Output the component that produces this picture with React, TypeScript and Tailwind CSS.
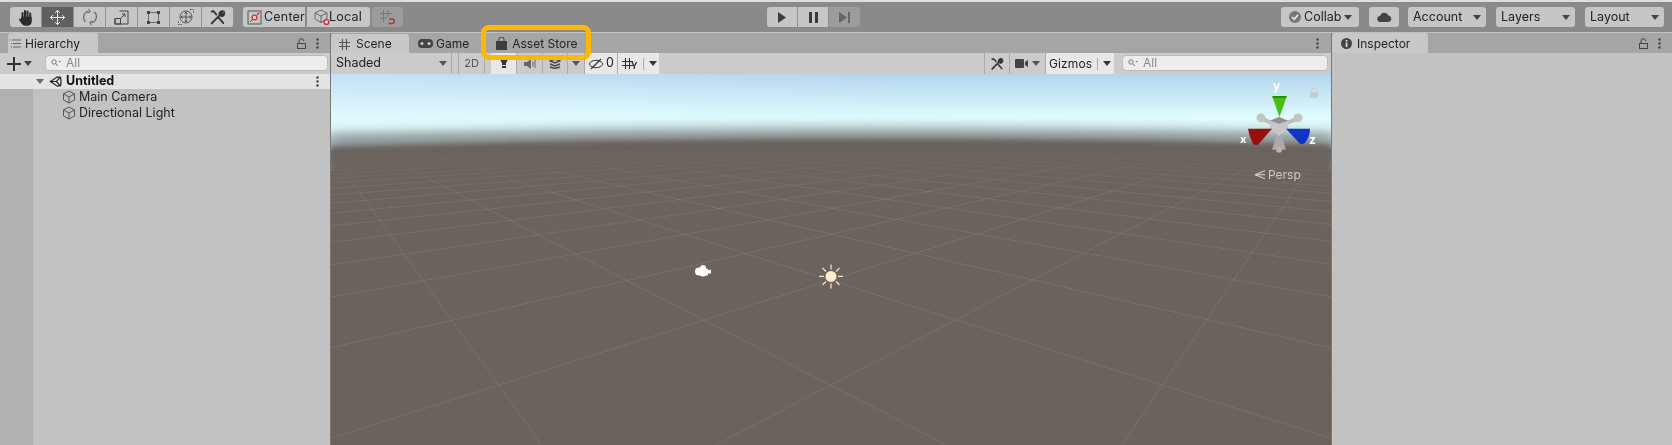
import React from 'react';
import { Move } from 'lucide-react';

// ---- small drawn icons ----
const Caret: React.FC<{ className?: string }> = ({ className = 'text-[#444]' }) => (
    <svg width="8" height="5" viewBox="0 0 8 5" className={className}><path d="M0 0h8L4 5z" fill="currentColor" /></svg>
);

const Dots: React.FC = () => (
    <svg width="3" height="11" viewBox="0 0 3 11" className="text-[#444]">
        <circle cx="1.5" cy="1.5" r="1.2" fill="currentColor" /><circle cx="1.5" cy="5.5" r="1.2" fill="currentColor" /><circle cx="1.5" cy="9.5" r="1.2" fill="currentColor" />
    </svg>
);

const LockOpen: React.FC = () => (
    <svg width="9" height="11" viewBox="0 0 9 11" fill="none" stroke="#444" strokeWidth="1">
        <path d="M2 5V3a2.3 2.3 0 0 1 4.6 0" /><rect x="0.5" y="5.5" width="8" height="5" />
    </svg>
);

const Cube: React.FC = () => (
    <svg width="14" height="14" viewBox="0 0 14 14" fill="none" stroke="#555" strokeWidth="1" className="shrink-0">
        <path d="M7 1l5.5 3v6L7 13 1.5 10V4zM1.5 4L7 7l5.5-3M7 7v6" />
    </svg>
);

const Magnifier: React.FC = () => (
    <svg width="10" height="8" viewBox="0 0 10 8" fill="none" stroke="#777" strokeWidth="1" className="shrink-0">
        <circle cx="3" cy="3" r="2.2" /><path d="M4.7 4.7L7 7" /><path d="M7.5 2h2.5L8.8 3.5z" fill="#777" stroke="none" />
    </svg>
);

const Grid: React.FC<{ className?: string }> = ({ className = 'text-[#555]' }) => (
    <svg width="11" height="11" viewBox="0 0 11 11" fill="none" stroke="currentColor" strokeWidth="1.1" className={className}>
        <path d="M3.5 0v11M7.5 0v11M0 3.5h11M0 7.5h11" />
    </svg>
);

const ListIcon: React.FC = () => (
    <svg width="12" height="9" viewBox="0 0 12 9" fill="none" stroke="#666" strokeWidth="1" className="mr-[4px] ml-[1px]">
        <path d="M0 1h1M3 1h9M2 4.500h1M4 4.500h8M2 8h1M4 8h8" />
    </svg>
);

const HandIcon = () => (
    <svg width="16" height="17" viewBox="0 0 16 17" fill="none" stroke="#2b2b2b" strokeLinecap="round">
        <path d="M4.500 9V4M7 8V2M9.500 8V2.500M12.200 9V4.500" strokeWidth="2" />
        <path d="M4 8.500h9V12c0 2.500-1.500 4-4 4H7.500C5.500 16 4.800 15 4 13.800L1.800 10.500" fill="#2b2b2b" strokeWidth="1.600" strokeLinejoin="round" />
    </svg>
);

const Tools: React.FC<{ size?: number }> = ({ size = 17 }) => (
    <svg width={size} height={size} viewBox="0 0 16 16" fill="none" stroke="#333" strokeLinecap="round">
        <path d="M2.500 13.500L10 6" strokeWidth="1.900" />
        <path d="M9.500 5a3 3 0 0 1 4-3l-1.800 1.800 1 1L14.500 3a3 3 0 0 1-3.200 4" strokeWidth="1.200" fill="#333" />
        <path d="M2.500 2.500L4 2l3 3.200M9 8.200l4.500 5" strokeWidth="1.700" />
    </svg>
);

const RotateIcon = () => (
    <svg width="18" height="18" viewBox="0 0 18 18" fill="none" stroke="#666" strokeWidth="1.100">
        <path d="M7 3.200A6.500 6.500 0 0 0 4.500 14" /><path d="M11 14.800A6.500 6.500 0 0 0 13.500 4" /><path d="M7.500 1L9 3.500 6.500 5" /><path d="M10.500 17L9 14.500l2.500-1.500" />
    </svg>
);

const ScaleIcon = () => (
    <svg width="15" height="15" viewBox="0 0 15 15" fill="none" stroke="#444" strokeWidth="1">
        <path d="M5.500 1H14v13H1V9" /><rect x="1" y="8.500" width="5.500" height="5.500" /><path d="M7 8l4-4M8 4h3v3" />
    </svg>
);

const RectIcon = () => (
    <svg width="15" height="15" viewBox="0 0 15 15" fill="#444" stroke="#444">
        <path d="M2.500 2.500h10v10h-10z" fill="none" strokeWidth="0.700" /><rect x="1.500" y="1.500" width="2" height="2" /><rect x="11.500" y="1.500" width="2" height="2" /><rect x="1.500" y="11.500" width="2" height="2" /><rect x="11.500" y="11.500" width="2" height="2" />
    </svg>
);

const TransformIcon = () => (
    <svg width="18" height="18" viewBox="0 0 18 18" fill="none" stroke="#555" strokeWidth="1">
        <circle cx="9" cy="9" r="6" /><path d="M9 4v10M4 9h10M7.500 5.500L9 4l1.500 1.500M7.500 12.500L9 14l1.500-1.500M5.500 7.500L4 9l1.500 1.500M12.500 7.500L14 9l-1.500 1.500" /><path d="M13 1.500h3.500V5M5 16.500H1.500V13" strokeDasharray="1.500 1" />
    </svg>
);

const PivotCenter = () => (
    <svg width="15" height="15" viewBox="0 0 15 15" fill="none" className="shrink-0">
        <rect x="1" y="1" width="13" height="13" stroke="#555" /><path d="M3 12l8-8" stroke="#555" /><circle cx="7.500" cy="7.500" r="2.400" stroke="#c33" strokeWidth="1.300" fill="#ddd" /><circle cx="11.500" cy="3.500" r="1" fill="#c33" />
    </svg>
);

const PivotLocal = () => (
    <svg width="17" height="17" viewBox="0 0 17 17" fill="none" className="shrink-0">
        <path d="M7 1l6 3v6l-6 3.500L1 10V4zM1 4l6 3 6-3M7 7v6.500" stroke="#666" /><circle cx="12.500" cy="13" r="2.400" stroke="#c33" strokeWidth="1.400" fill="#ddd" />
    </svg>
);

const SnapIcon = () => (
    <svg width="15" height="15" viewBox="0 0 15 15" fill="none">
        <path d="M3.500 0v12M8 0v7M0 3.500h12M0 8h7" stroke="#777" strokeWidth="1" /><path d="M9 9h3a2 2 0 0 1 0 4.500H8.500" stroke="#b33" strokeWidth="1.500" />
    </svg>
);

const UnityLogo = () => (
    <svg width="13" height="13" viewBox="0 0 14 14" fill="none" stroke="#222" strokeWidth="1.300" className="shrink-0">
        <path d="M1.500 7L9 2l3.500 0.500L13 7l-.5 4.500L9 12z" /><path d="M1.500 7H8L12 2.500M8 7l4 4.500" />
    </svg>
);

// ---- toolbar ----
const ToolButton: React.FC<{ children: React.ReactNode; active?: boolean; first?: boolean; last?: boolean; narrow?: boolean }> = ({ children, active, first, last, narrow }) => (
    <div className={`flex h-[20px] ${narrow ? 'w-[31px]' : 'w-[32px]'} items-center justify-center border-r border-[#8f8f8f] ${active ? 'bg-[#5f5f5f]' : 'bg-[#c6c6c6]'} ${first ? 'rounded-l-[3px]' : ''} ${last ? 'rounded-r-[3px]' : ''}`}>
        {children}
    </div>
);

const MenuButton: React.FC<{ label: string; width: string }> = ({ label, width }) => (
    <div className={`flex h-[20px] ${width} items-center justify-between rounded-[3px] bg-[#c6c6c6] pl-[5px] pr-[5px] text-[12.5px] text-[#222]`}>
        <span>{label}</span>
        <Caret />
    </div>
);

const TopBar: React.FC = () => (
    <div className="flex h-[30px] shrink-0 items-center bg-[#8a8a8a] pl-[10px]">
        <div className="flex">
            <ToolButton first><HandIcon /></ToolButton>
            <ToolButton active><Move size={17} stroke="#eee" strokeWidth={1.4} /></ToolButton>
            <ToolButton><RotateIcon /></ToolButton>
            <ToolButton><ScaleIcon /></ToolButton>
            <ToolButton><RectIcon /></ToolButton>
            <ToolButton><TransformIcon /></ToolButton>
            <ToolButton last><Tools /></ToolButton>
        </div>
        <div className="ml-[9px] flex gap-[2px]">
            <div className="flex h-[20px] w-[62px] items-center gap-[2px] rounded-l-[3px] bg-[#c6c6c6] pl-[4px] text-[12.5px] tracking-[0.2px] text-[#222]"><PivotCenter />Center</div>
            <div className="flex h-[20px] w-[63px] items-center rounded-r-[3px] bg-[#c6c6c6] pl-[7px] text-[12.5px] tracking-[0.2px] text-[#222]"><PivotLocal /><span className="-ml-[2px]">Local</span></div>
        </div>
        <div className="ml-[2px] flex h-[20px] w-[31px] items-center justify-center rounded-[3px] bg-[#9c9c9c]"><SnapIcon /></div>

        <div className="ml-[364px] flex">
            <ToolButton first narrow>
                <svg width="10" height="11" viewBox="0 0 10 11"><path d="M1 0l8 5.500L1 11z" fill="#3a3a3a" /></svg>
            </ToolButton>
            <ToolButton narrow>
                <svg width="9" height="11" viewBox="0 0 9 11" fill="#3a3a3a"><rect width="3" height="11" /><rect x="6" width="3" height="11" /></svg>
            </ToolButton>
            <div className="flex h-[20px] w-[31px] items-center justify-center rounded-r-[3px] bg-[#9c9c9c]">
                <svg width="11" height="11" viewBox="0 0 11 11" fill="#666"><path d="M0 0l8 5.500L0 11z" /><rect x="9" width="2" height="11" /></svg>
            </div>
        </div>

        <div className="ml-[421px] flex h-[20px] w-[78px] items-center gap-[3px] rounded-[3px] bg-[#c6c6c6] pl-[8px] text-[12.5px] text-[#222]">
            <svg width="12" height="12" viewBox="0 0 12 12" className="shrink-0"><circle cx="6" cy="6" r="6" fill="#777" /><path d="M3 6l2.200 2.400L9 3.800" fill="none" stroke="#eee" strokeWidth="1.600" /></svg>
            Collab<Caret />
        </div>
        <div className="ml-[10px] flex h-[20px] w-[30px] items-center justify-center rounded-[3px] bg-[#c6c6c6]">
            <svg width="15" height="10" viewBox="0 0 15 10" fill="#444"><path d="M3.500 10a3 3 0 0 1-.5-6A4.500 4.500 0 0 1 11.500 3.500 3.300 3.300 0 0 1 11.500 10z" /></svg>
        </div>
        <div className="ml-[9px]"><MenuButton label="Account" width="w-[78px]" /></div>
        <div className="ml-[10px]"><MenuButton label="Layers" width="w-[79px]" /></div>
        <div className="ml-[10px]"><MenuButton label="Layout" width="w-[79px]" /></div>
    </div>
);

// ---- panels ----
const PanelTab: React.FC<{ children: React.ReactNode; width: string; active?: boolean }> = ({ children, width, active }) => (
    <div className={`flex h-[20px] ${width} items-center pt-[1px] text-[12px] text-[#1f1f1f] ${active ? 'rounded-t-[3px] bg-[#c8c8c8]' : ''}`}>
        {children}
    </div>
);

const SearchBox: React.FC<{ width: string }> = ({ width }) => (
    <div className={`flex h-[16px] ${width} items-center gap-[5px] rounded-[4px] border border-[#bbb] bg-[#ededed] pl-[5px] text-[12px] text-[#8a8a8a]`}>
        <Magnifier />All
    </div>
);

const HierarchyPanel: React.FC = () => (
    <div className="flex w-[330px] shrink-0 flex-col bg-[#c2c2c2]">
        <div className="flex h-[20px] items-center bg-[#a5a5a5] pl-[8px] pr-[11px]">
            <PanelTab width="w-[90px]" active>
                <ListIcon />Hierarchy
            </PanelTab>
            <div className="ml-auto flex items-center gap-[10px]"><LockOpen /><Dots /></div>
        </div>
        <div className="flex h-[21px] items-center bg-[#cbcbcb] pl-[7px]">
            <svg width="14" height="14" viewBox="0 0 14 14" fill="#333"><rect y="6" width="14" height="2" /><rect x="6" width="2" height="14" /></svg>
            <span className="ml-[3px]"><Caret /></span>
            <span className="-mt-[2px] ml-[13px]"><SearchBox width="w-[283px]" /></span>
        </div>
        <div className="flex h-[15px] items-center bg-[#e4e4e4] pl-[36px] pr-[11px] text-[12.5px] font-bold text-[#111]">
            <Caret className="text-[#666]" />
            <span className="ml-[5px] mr-[4px]"><UnityLogo /></span>
            Untitled
            <span className="ml-auto"><Dots /></span>
        </div>
        <div className="flex flex-1">
            <div className="w-[33px] bg-[#b0b0b0]" />
            <div className="flex flex-col pl-[29px] text-[12.5px] leading-[16px] text-[#222]">
                <div className="flex h-[16px] items-center gap-[3px]"><Cube />Main Camera</div>
                <div className="flex h-[16px] items-center gap-[3px]"><Cube />Directional Light</div>
            </div>
        </div>
    </div>
);

// ---- scene view: perspective floor, drawn ----
const VP_A = { x: 303, y: 113 };
const VP_B = { x: 1343, y: 117 };
const REF_Y = 385;
const BOTTOM = 470;

const gridLine = (vp: { x: number; y: number }, xRef: number) => ({
    x1: vp.x,
    y1: vp.y,
    x2: vp.x + ((xRef - vp.x) * (BOTTOM - vp.y)) / (REF_Y - vp.y),
    y2: BOTTOM,
});

const range = (from: number, to: number) => Array.from({ length: to - from + 1 }, (_, i) => from + i);

const majorA = range(-1, 24).map((k) => gridLine(VP_A, 830.6 + 332 * k));
const majorB = range(-26, 3).map((k) => gridLine(VP_B, 498.4 + 332 * k));
const minorA = range(-10, 240).map((k) => gridLine(VP_A, 830.6 + 33.2 * k));
const minorB = range(-260, 30).map((k) => gridLine(VP_B, 498.4 + 33.2 * k));

const HORIZON = (dy: number) => `M331 ${146 + dy}Q830 ${131 + dy} 1331 ${144 + dy}V445H331Z`;

const SceneDrawing: React.FC = () => (
    <svg viewBox="331 73 1000 372" className="absolute inset-0 h-full w-full" preserveAspectRatio="none">
        <defs>
            <linearGradient id="sky" x1="0" y1="73" x2="0" y2="150" gradientUnits="userSpaceOnUse">
                <stop offset="0" stopColor="#b4d4ec" />
                <stop offset="0.58" stopColor="#e0fdff" />
                <stop offset="0.7" stopColor="#dcf6f7" />
                <stop offset="1" stopColor="#8f9a9b" />
            </linearGradient>
            <linearGradient id="skyLeft" x1="331" y1="0" x2="900" y2="0" gradientUnits="userSpaceOnUse">
                <stop offset="0" stopColor="#dff6ff" stopOpacity="0.4" />
                <stop offset="1" stopColor="#dff6ff" stopOpacity="0" />
            </linearGradient>
            <linearGradient id="floorFade" x1="0" y1="148" x2="0" y2="196" gradientUnits="userSpaceOnUse">
                <stop offset="0" stopColor="#6a625d" />
                <stop offset="1" stopColor="#6a625d" stopOpacity="0" />
            </linearGradient>
            <filter id="soft" x="-5%" y="-20%" width="110%" height="140%"><feGaussianBlur stdDeviation="2.500" /></filter>
            <filter id="softer" x="-5%" y="-20%" width="110%" height="140%"><feGaussianBlur stdDeviation="7" /></filter>
            <clipPath id="floorClip"><path d={HORIZON(4)} /></clipPath>
        </defs>

        <rect x="331" y="73" width="1000" height="90" fill="url(#sky)" />
        <rect x="331" y="73" width="1000" height="50" fill="url(#skyLeft)" />
        <path d={HORIZON(-10)} fill="#8c9495" filter="url(#softer)" />
        <path d={HORIZON(0)} fill="#6a625d" filter="url(#soft)" />
        <rect x="331" y="170" width="1000" height="275" fill="#6a625d" />

        <g clipPath="url(#floorClip)">
            {minorA.concat(minorB).map((l, i) => (
                <line key={i} {...l} stroke="#ffffff" strokeOpacity="0.016" strokeWidth="1" />
            ))}
            {majorA.concat(majorB).map((l, i) => (
                <line key={i} {...l} stroke="#ffffff" strokeOpacity="0.085" strokeWidth="1" />
            ))}
            <rect x="331" y="130" width="1000" height="66" fill="url(#floorFade)" />
        </g>

        {/* camera gizmo */}
        <g fill="#ffffff">
            <circle cx="699" cy="271" r="4" /><circle cx="703" cy="272" r="4" /><circle cx="703" cy="267.500" r="3" /><rect x="700" y="268" width="8" height="7" rx="1" />
            <path d="M707 270l4-1v4h-4z" />
        </g>

        {/* light gizmo */}
        <g stroke="#efe3bd" strokeWidth="1.300">
            <path d="M831 264v5M831 283v5M819 276h5M838 276h5M822.500 267.500l3.500 3.500M836 281l3.500 3.500M839.500 267.500l-3.500 3.500M826 281l-3.500 3.500" />
            <circle cx="831" cy="276" r="5.500" fill="#fdeecb" stroke="none" />
        </g>

        {/* orientation gizmo */}
        <g>
            <path d="M1279 125L1262 118M1279 125L1297 118" stroke="#bcbcbc" strokeWidth="4" />
            <path d="M1279 125l-7 24h14z" fill="#a9a9a9" />
            <circle cx="1261" cy="117" r="4.500" fill="#c4c4c4" /><circle cx="1298" cy="117" r="4.500" fill="#c4c4c4" />
            <circle cx="1279" cy="149" r="3" fill="#b5b5b5" />
            <path d="M1270 120l9-4 9 4v8l-9 7-9-7z" fill="#c7c7c7" />
            <path d="M1270 120l9-4 9 4-9 3z" fill="#8f8f8f" />
            <path d="M1272 95h15l-7.500 21z" fill="#46c20e" /><path d="M1272 95h15l-2 2h-11z" fill="#2c8a08" />
            <path d="M1248 128h24l-14 16q-3 1-5-1-4-7-5-15z" fill="#961010" />
            <path d="M1286 128h24q0 8-5 14-2 2-5 1z" fill="#1233c4" />
        </g>
        <rect x="1310" y="91" width="8" height="6" fill="#c8ccd0" /><path d="M1311.500 91v-1.500a2.500 2.500 0 0 1 5 0" fill="none" stroke="#c8ccd0" />
        <path d="M1265 170l-10 4 10 4" fill="none" stroke="#dcdcdc" strokeWidth="1" /><path d="M1255 174h10" stroke="#dcdcdc" />
    </svg>
);

const SceneToolbarCell: React.FC<{ children?: React.ReactNode; width: string; on?: boolean }> = ({ children, width, on }) => (
    <div className={`flex h-[21px] ${width} items-center justify-center border-r border-[#aaa] ${on ? 'bg-[#e8e8e8]' : ''}`}>{children}</div>
);

const SceneView: React.FC = () => (
    <div className="relative flex flex-1 flex-col border-x border-[#777]">
        <div className="flex h-[20px] items-center bg-[#a5a5a5] pr-[12px] pt-[1px] text-[12px] text-[#1f1f1f]">
            <PanelTab width="w-[78px]" active>
                <span className="ml-[8px] mr-[6px]"><Grid /></span>Scene
            </PanelTab>
            <svg width="15" height="9" viewBox="0 0 15 9" className="ml-[9px] mr-[3px]"><rect width="15" height="9" rx="4" fill="#444" /><circle cx="4" cy="4.500" r="1.500" fill="#ccc" /><circle cx="11" cy="4.500" r="1.500" fill="#ccc" /></svg>
            Game
            <svg width="11" height="13" viewBox="0 0 11 13" className="ml-[27px] mr-[5px]" fill="#3d3d3d"><path d="M0 4h11v9H0z" /><path d="M3 4V2.500a2.500 2.500 0 0 1 5 0V4" fill="none" stroke="#3d3d3d" strokeWidth="1" /></svg>
            <span>Asset Store</span>
            <span className="ml-auto"><Dots /></span>
        </div>

        <div className="flex h-[21px] items-center bg-[#cbcbcb] text-[12.5px] text-[#222]">
            <div className="flex h-full w-[121px] items-center justify-between border-r border-[#aaa] pl-[5px] pr-[4px]">Shaded<Caret className="text-[#555]" /></div>
            <div className="w-[6px]" />
            <SceneToolbarCell width="w-[27px] border-l"><span className="text-[11px] text-[#555]">2D</span></SceneToolbarCell>
            <div className="w-[6px]" />
            <SceneToolbarCell width="w-[26px]" on>
                <svg width="10" height="11" viewBox="0 0 10 11" fill="#333"><path d="M0 0h10L7 5v2H3V5z" /><rect x="3" y="8" width="4" height="2" /></svg>
            </SceneToolbarCell>
            <SceneToolbarCell width="w-[26px]">
                <svg width="12" height="10" viewBox="0 0 12 10" fill="#666"><path d="M0 3h3l4-3v10L3 7H0z" /><path d="M9 2.500v5M11 1v8" stroke="#666" /></svg>
            </SceneToolbarCell>
            <div className="flex h-full w-[24px] items-center justify-center">
                <svg width="12" height="11" viewBox="0 0 12 11" fill="none" stroke="#444" strokeWidth="1.400"><path d="M1 3l5-2 5 2-5 2zM1 6l5 2 5-2M1 9l5 1.500L11 9" /></svg>
            </div>
            <SceneToolbarCell width="w-[18px] border-l"><Caret className="text-[#555]" /></SceneToolbarCell>
            <SceneToolbarCell width="w-[33px]" on>
                <svg width="16" height="12" viewBox="0 0 16 12" fill="none" stroke="#333" className="mr-[2px]"><path d="M1 6c3-5 11-5 14 0-3 5-11 5-14 0z" /><path d="M3 11L13 1" strokeWidth="1.300" /></svg>
                <span>0</span>
            </SceneToolbarCell>
            <div className="flex h-full w-[41px] items-center bg-[#e8e8e8] pl-[4px]">
                <Grid className="text-[#333]" />
                <span className="-ml-[2px] mt-[3px] text-[9px] font-bold leading-none text-[#333]">Y</span>
                <span className="ml-[5px] h-[12px] border-l border-[#aaa]" />
                <span className="ml-[5px]"><Caret className="text-[#333]" /></span>
            </div>

            <div className="ml-auto flex h-full items-center border-l border-[#aaa]">
                <SceneToolbarCell width="w-[25px]"><Tools size={14} /></SceneToolbarCell>
                <SceneToolbarCell width="w-[36px]">
                    <svg width="13" height="9" viewBox="0 0 13 9" fill="#444"><rect width="9" height="9" rx="1" /><path d="M10 3l3-2v7l-3-2z" /></svg>
                    <span className="ml-[4px]"><Caret className="text-[#555]" /></span>
                </SceneToolbarCell>
                <div className="flex h-full w-[68px] items-center bg-[#e8e8e8] pl-[3px] text-[12px] tracking-[0.1px]">
                    Gizmos
                    <span className="ml-[5px] h-[12px] border-l border-[#aaa]" />
                    <span className="ml-[5px]"><Caret className="text-[#333]" /></span>
                </div>
                <span className="-mt-[2px] ml-[8px] mr-[3px]"><SearchBox width="w-[206px]" /></span>
            </div>
        </div>

        <div className="relative flex-1 overflow-hidden">
            <SceneDrawing />
            <span className="absolute left-[942px] top-[3px] text-[12px] font-bold text-white">y</span>
            <span className="absolute left-[909px] top-[57px] text-[11px] font-bold text-white">x</span>
            <span className="absolute left-[978px] top-[57px] text-[12px] font-bold text-white">z</span>
            <span className="absolute left-[937px] top-[92px] text-[12px] text-[#c9c9c9]">Persp</span>
        </div>

        {/* highlight round the Asset Store tab */}
        <div className="absolute left-[150px] top-[-8px] h-[35px] w-[110px] rounded-[8px] border-[5px] border-[#fdb900]" />
    </div>
);

const InspectorPanel: React.FC = () => (
    <div className="flex w-[340px] shrink-0 flex-col bg-[#c2c2c2]">
        <div className="flex h-[20px] items-center bg-[#a5a5a5] pr-[11px]">
            <PanelTab width="w-[96px]" active>
                <svg width="11" height="11" viewBox="0 0 11 11" className="ml-[9px] mr-[5px]"><circle cx="5.500" cy="5.500" r="5.500" fill="#444" /><rect x="4.700" y="4.500" width="1.700" height="4.500" fill="#ddd" /><rect x="4.700" y="2" width="1.700" height="1.700" fill="#ddd" /></svg>
                Inspector
            </PanelTab>
            <div className="ml-auto flex items-center gap-[10px]"><LockOpen /><Dots /></div>
        </div>
    </div>
);

export default function App() {
    return (
        <div className="flex h-[445px] w-[1672px] flex-col overflow-hidden bg-[#c2c2c2] font-['Inter',sans-serif] blur-[0.4px]">
            <div className="h-[2px] shrink-0 bg-[#dedede]" />
            <TopBar />
            <div className="mt-[1px] flex min-h-0 flex-1">
                <HierarchyPanel />
                <SceneView />
                <InspectorPanel />
            </div>
        </div>
    );
}
